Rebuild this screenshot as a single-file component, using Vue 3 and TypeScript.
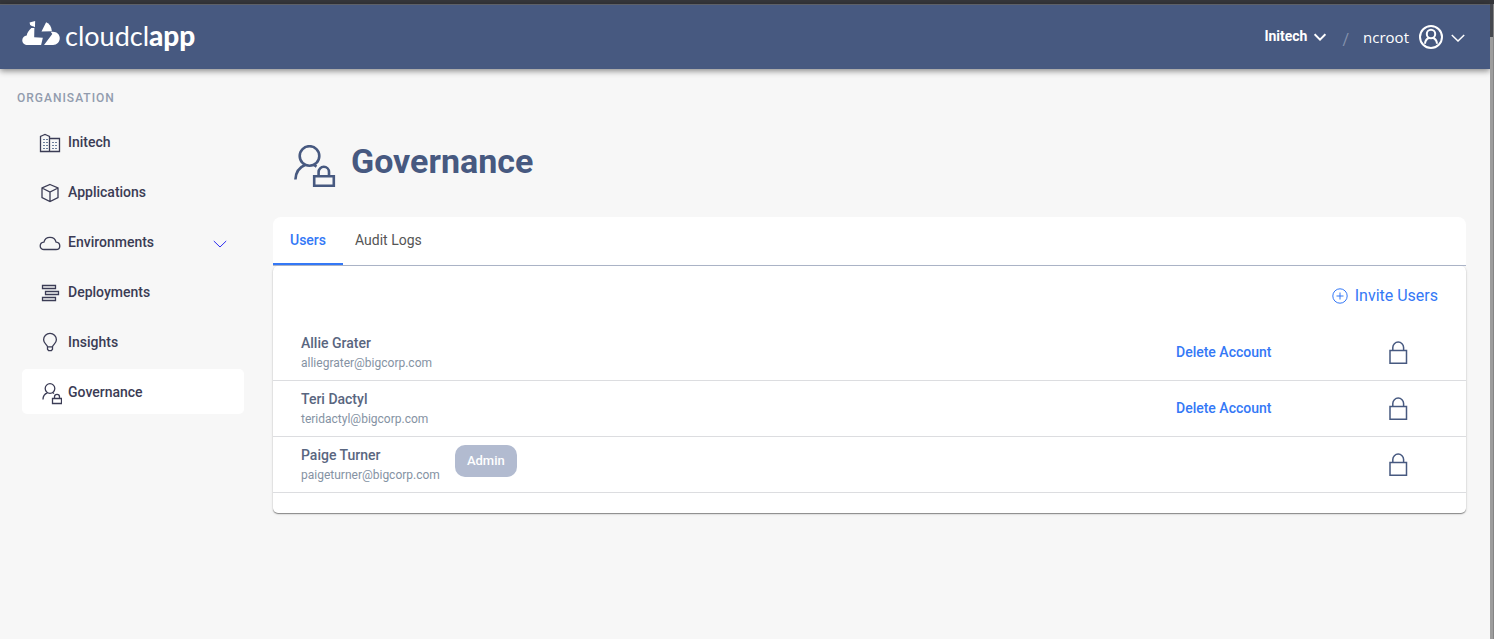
<script setup lang="ts">
import { ref } from 'vue'

interface NavItem {
  id: string
  label: string
  expandable?: boolean
}

interface User {
  name: string
  email: string
  admin?: boolean
}

const navItems: NavItem[] = [
  { id: 'organisation', label: 'Initech' },
  { id: 'applications', label: 'Applications' },
  { id: 'environments', label: 'Environments', expandable: true },
  { id: 'deployments', label: 'Deployments' },
  { id: 'insights', label: 'Insights' },
  { id: 'governance', label: 'Governance' },
]
const activeNav = ref('governance')

const tabs: string[] = ['Users', 'Audit Logs']
const activeTab = ref('Users')

const users: User[] = [
  { name: 'Allie Grater', email: 'alliegrater@bigcorp.com' },
  { name: 'Teri Dactyl', email: 'teridactyl@bigcorp.com' },
  { name: 'Paige Turner', email: 'paigeturner@bigcorp.com', admin: true },
]
</script>

<template>
  <div class="shell">
    <div class="page">
      <header class="topbar">
        <a href="#" class="brand">
          <svg class="brand-mark" viewBox="0 0 40 26" aria-hidden="true">
            <path d="M7.6 1.6 L13.4 0 L13.2 6.4 L11.8 5.6 Q10 5.4 8.2 4.2 Z" />
            <path d="M9.4 7.2 L12.6 7.4 L12.4 17 L21.4 17.4 L19.6 25 H5.6 C2.4 25 0 22.8 0 20 C0 17.4 2 15.3 4.6 15 C5.2 11.8 7 9.4 9.4 7.2 Z" />
            <path d="M24.8 1.4 C28.2 2.8 30.4 6 30.8 10.6 L20 10.8 Z" />
            <path d="M31 11.2 C35.8 10.8 39 14 39 17.8 C39 22 36 25 32 25 H22.6 L31.2 13.6 L29.6 11.2 Z" />
          </svg>
          <span class="brand-name">cloudcl<b>app</b></span>
        </a>
        <div class="account">
          <button type="button" class="org-switch">
            Initech
            <svg class="chev-org" viewBox="0 0 12 8" aria-hidden="true"><path d="M.6 1.2 6 6.6 11.4 1.2" /></svg>
          </button>
          <span class="slash">/</span>
          <button type="button" class="user-switch">
            <span>ncroot</span>
            <svg class="avatar" viewBox="0 0 24 24" aria-hidden="true">
              <circle cx="12" cy="12" r="11" />
              <circle cx="12" cy="9" r="4.2" />
              <path d="M6 18.8C6.2 15.8 8 13.6 10.2 12.8M18 18.8C17.8 15.8 16 13.6 13.8 12.8" />
            </svg>
            <svg class="chev-user" viewBox="0 0 14 8" aria-hidden="true"><path d="M.8 1 7 7 13.2 1" /></svg>
          </button>
        </div>
      </header>

      <div class="body">
        <nav class="sidebar" aria-label="Organisation">
          <h2 class="side-title">ORGANISATION</h2>
          <ul class="nav">
            <li v-for="item in navItems" :key="item.id">
              <a
                href="#"
                class="nav-link"
                :class="{ active: item.id === activeNav }"
                @click.prevent="activeNav = item.id"
              >
                <svg class="nav-icon" viewBox="0 0 24 24" aria-hidden="true">
                  <g v-if="item.id === 'organisation'">
                    <path d="M2.5 20.5V5.5L4.5 4.5 7 3.5 9.5 4.5 11.5 5.5V20.5ZM11.5 7.5H21.5V20.5H11.5" />
                    <path class="dots" d="M5 8.5H10M5 11.5H10M5 14.5H10M5 17.5H10M14 11.5H19M14 14.5H19M14 17.5H19" />
                  </g>
                  <g v-else-if="item.id === 'applications'">
                    <path d="M12 3.5 20 7V16.5L12 20.5 4 16.5V7ZM4 7 12 11 20 7M12 11V20.5" />
                  </g>
                  <g v-else-if="item.id === 'environments'">
                    <path d="M6 18.5C3.8 18.5 2.2 16.9 2.2 14.9 2.2 12.9 3.8 11.3 5.9 11.1 6.6 8.2 8.9 6.3 12 6.3 15.1 6.3 17.4 8.2 18.1 11.1 20.3 11.3 21.8 12.9 21.8 14.9 21.8 16.9 20.2 18.5 18 18.5Z" />
                  </g>
                  <g v-else-if="item.id === 'deployments'">
                    <path d="M4.5 4.5H17.5V7.5H4.5ZM7.5 10.5H20.5V13.5H7.5ZM4.5 16.5H17.5V19.5H4.5Z" />
                  </g>
                  <g v-else-if="item.id === 'insights'">
                    <path d="M9.5 15.8C9.3 13.6 5.6 12.6 5.6 8.8A6.4 6.4 0 0 1 18.4 8.8C18.4 12.6 14.7 13.6 14.5 15.8ZM9.5 15.8V18.2L10.6 19.6H13.4L14.5 18.2V15.8" />
                  </g>
                  <g v-else>
                    <circle cx="12" cy="7.5" r="4.8" />
                    <path d="M5 18.5C5 15.2 6.8 12.8 9.4 11.9M14.6 11.5 16 12.6M14.5 17.5H23.5V22.5H14.5ZM16.5 17.5V15.8A2.5 2.5 0 0 1 21.5 15.8V17.5" />
                  </g>
                </svg>
                <span class="nav-label">{{ item.label }}</span>
                <svg v-if="item.expandable" class="nav-chev" viewBox="0 0 14 8" aria-hidden="true">
                  <path d="M.8 1 7 7 13.2 1" />
                </svg>
              </a>
            </li>
          </ul>
        </nav>

        <main class="content">
          <div class="heading">
            <svg class="heading-icon" viewBox="0 0 42 42" aria-hidden="true">
              <circle cx="15.5" cy="11" r="9.8" />
              <path d="M1.4 34.5C1.8 27 6 22 11 20M20 20 22.5 21.6M20.2 31.2H39.8V40.7H20.2ZM24.6 31V27A5.2 5.2 0 0 1 35 27V31" />
            </svg>
            <h1>Governance</h1>
          </div>

          <div class="tabs" role="tablist">
            <button
              v-for="tab in tabs"
              :key="tab"
              type="button"
              role="tab"
              class="tab"
              :class="{ active: tab === activeTab }"
              :aria-selected="tab === activeTab"
              @click="activeTab = tab"
            >
              {{ tab }}
            </button>
          </div>

          <section class="panel">
            <div class="toolbar">
              <button type="button" class="invite">
                <svg class="plus" viewBox="0 0 16 16" aria-hidden="true">
                  <circle cx="8" cy="8" r="7.2" />
                  <path d="M8 4.5V11.5M4.5 8H11.5" />
                </svg>
                Invite Users
              </button>
            </div>
            <table class="users">
              <tbody>
                <tr v-for="user in users" :key="user.email">
                  <td>
                    <div class="person">
                      <div>
                        <div class="name">{{ user.name }}</div>
                        <div class="email">{{ user.email }}</div>
                      </div>
                      <span v-if="user.admin" class="badge">Admin</span>
                    </div>
                  </td>
                  <td class="col-action">
                    <button v-if="!user.admin" type="button" class="delete">Delete Account</button>
                  </td>
                  <td class="col-lock">
                    <button type="button" class="lock" :aria-label="`Lock ${user.name}`">
                      <svg viewBox="0 0 20 24" aria-hidden="true">
                        <path d="M2 9.5H18.5V22.2H2ZM4.8 9.5V6.5A5.4 5.4 0 0 1 15.6 6.5V9.5" />
                      </svg>
                    </button>
                  </td>
                </tr>
              </tbody>
            </table>
          </section>
        </main>
      </div>
    </div>
    <div class="rail" aria-hidden="true"></div>
  </div>
</template>

<style>
body {
  margin: 0;
  background: #f7f7f7;
}
</style>

<style scoped>
.shell {
  display: grid;
  grid-template-columns: minmax(0, 1fr) 4px;
  min-height: 100vh;
  border-top: 4px solid #35363a;
  box-sizing: border-box;
  font-family: Roboto, "Liberation Sans", sans-serif;
  color: #3b3c55;
}

.rail {
  background: linear-gradient(#45484f 33px, #9d9d9d 33px);
  border-right: 1px solid #858585;
}

button {
  padding: 0;
  border: 0;
  background: none;
  font: inherit;
  color: inherit;
  cursor: pointer;
}

a {
  color: inherit;
  text-decoration: none;
}

svg {
  flex: none;
  fill: none;
  stroke: currentColor;
}

.topbar {
  display: flex;
  align-items: center;
  justify-content: space-between;
  height: 65px;
  padding: 0 25px 0 22px;
  box-sizing: border-box;
  border-top: 1px solid #5d6067;
  background: #475980;
  color: #fff;
  box-shadow: 0 2px 6px rgba(0, 0, 0, 0.45);
}

.brand {
  display: flex;
  align-items: center;
  gap: 4px;
  padding-bottom: 4px;
}

.brand-mark {
  width: 39px;
  height: 25px;
  margin-bottom: 4px;
  fill: #fff;
  stroke: none;
}

.brand-name {
  font: 400 27px/32px Lato, sans-serif;
}

.brand-name b {
  font-size: 28px;
  font-weight: 900;
}

.account {
  display: flex;
  align-items: center;
}

.org-switch {
  display: flex;
  align-items: center;
  gap: 7px;
  padding-bottom: 2px;
  font-size: 14px;
  font-weight: 700;
}

.chev-org {
  width: 12px;
  height: 8px;
  margin-top: 2px;
  stroke-width: 2;
}

.slash {
  margin: 4px 14px 0 16px;
  font-size: 16px;
  color: #8592ad;
}

.user-switch {
  display: flex;
  align-items: center;
  font: 400 15px/20px "Open Sans", sans-serif;
}

.avatar {
  width: 24px;
  height: 24px;
  margin: 0 8px 0 10px;
  stroke-width: 2;
}

.chev-user {
  width: 14px;
  height: 8px;
  margin-top: 2px;
  stroke-width: 1.5;
}

.body {
  display: grid;
  grid-template-columns: 244px minmax(0, 1fr);
  column-gap: 29px;
  padding-right: 24px;
}

.sidebar {
  padding-top: 21px;
}

.side-title {
  margin: 0 0 12px 17px;
  font-size: 12px;
  line-height: 17px;
  font-weight: 500;
  letter-spacing: 1px;
  color: #929cae;
}

.nav {
  display: grid;
  gap: 5px;
  margin: 0;
  padding: 0 0 0 22px;
  list-style: none;
}

.nav-link {
  display: flex;
  align-items: center;
  height: 45px;
  padding: 0 17px 0 16px;
  border-radius: 5px;
  font-size: 14px;
  font-weight: 500;
}

.nav-link.active {
  background: #fff;
}

.nav-icon {
  width: 24px;
  height: 24px;
  margin: 3px 6px 0 0;
  stroke-width: 1.3;
}

.nav-icon .dots {
  stroke: #6d7f9c;
  stroke-width: 1;
  stroke-dasharray: 2 1;
}

.nav-label {
  flex: 1;
}

.nav-chev {
  width: 14px;
  height: 8px;
  margin-top: 4px;
  stroke: #2b2bf0;
}

.content {
  padding-top: 68px;
}

.heading {
  display: flex;
  align-items: center;
  gap: 15px;
  height: 50px;
  margin: 0 0 30px 21px;
}

.heading-icon {
  width: 42px;
  height: 42px;
  margin-top: 8px;
  stroke-width: 2.6;
  color: #475980;
}

h1 {
  margin: 0 0 2px;
  font-size: 34px;
  line-height: 40px;
  font-weight: 700;
  color: #475980;
}

.tabs {
  display: flex;
  height: 49px;
  box-sizing: border-box;
  border-bottom: 1px solid #adb6ca;
  border-radius: 8px 8px 0 0;
  background: #fff;
}

.tab {
  padding: 0 12px;
  border-bottom: 2px solid transparent;
  font-size: 14px;
  line-height: 46px;
  color: #555;
}

.tab.active {
  padding: 0 17px;
  border-bottom-color: #3478f6;
  color: #3478f6;
  font-weight: 500;
}

.panel {
  padding-bottom: 20px;
  border-radius: 5px;
  background: #fff;
  box-shadow: 0 1px 1px rgba(0, 0, 0, 0.4), 0 1px 3px rgba(0, 0, 0, 0.12);
}

.toolbar {
  display: flex;
  justify-content: flex-end;
  padding: 20px 28px 19px;
}

.invite {
  display: flex;
  align-items: center;
  gap: 7px;
  font-size: 16px;
  line-height: 20px;
  color: #3478f6;
}

.plus {
  width: 16px;
  height: 16px;
}

.users {
  width: 100%;
  border-collapse: collapse;
}

.users td {
  height: 55px;
  padding: 0;
  border-bottom: 1px solid #dcdde0;
}

.users td:first-child {
  padding-left: 28px;
}

.person {
  display: flex;
  gap: 15px;
}

.name {
  font-size: 14px;
  line-height: 20px;
  font-weight: 500;
  color: #596680;
}

.email {
  font-size: 12px;
  line-height: 20px;
  color: #8592a3;
}

.badge {
  align-self: flex-start;
  padding: 0 12px;
  border-radius: 10px;
  background: #b2bbd0;
  color: #fff;
  font-size: 13px;
  font-weight: 500;
  line-height: 32px;
}

.users .col-action {
  width: 154px;
  padding-bottom: 2px;
  height: 53px;
}

.users .col-lock {
  width: 136px;
  text-align: center;
}

.delete {
  font-size: 14px;
  font-weight: 500;
  color: #3478f6;
}

.lock {
  color: #475980;
  vertical-align: middle;
}

.lock svg {
  display: block;
  width: 20px;
  height: 24px;
  stroke-width: 1.5;
}
</style>
